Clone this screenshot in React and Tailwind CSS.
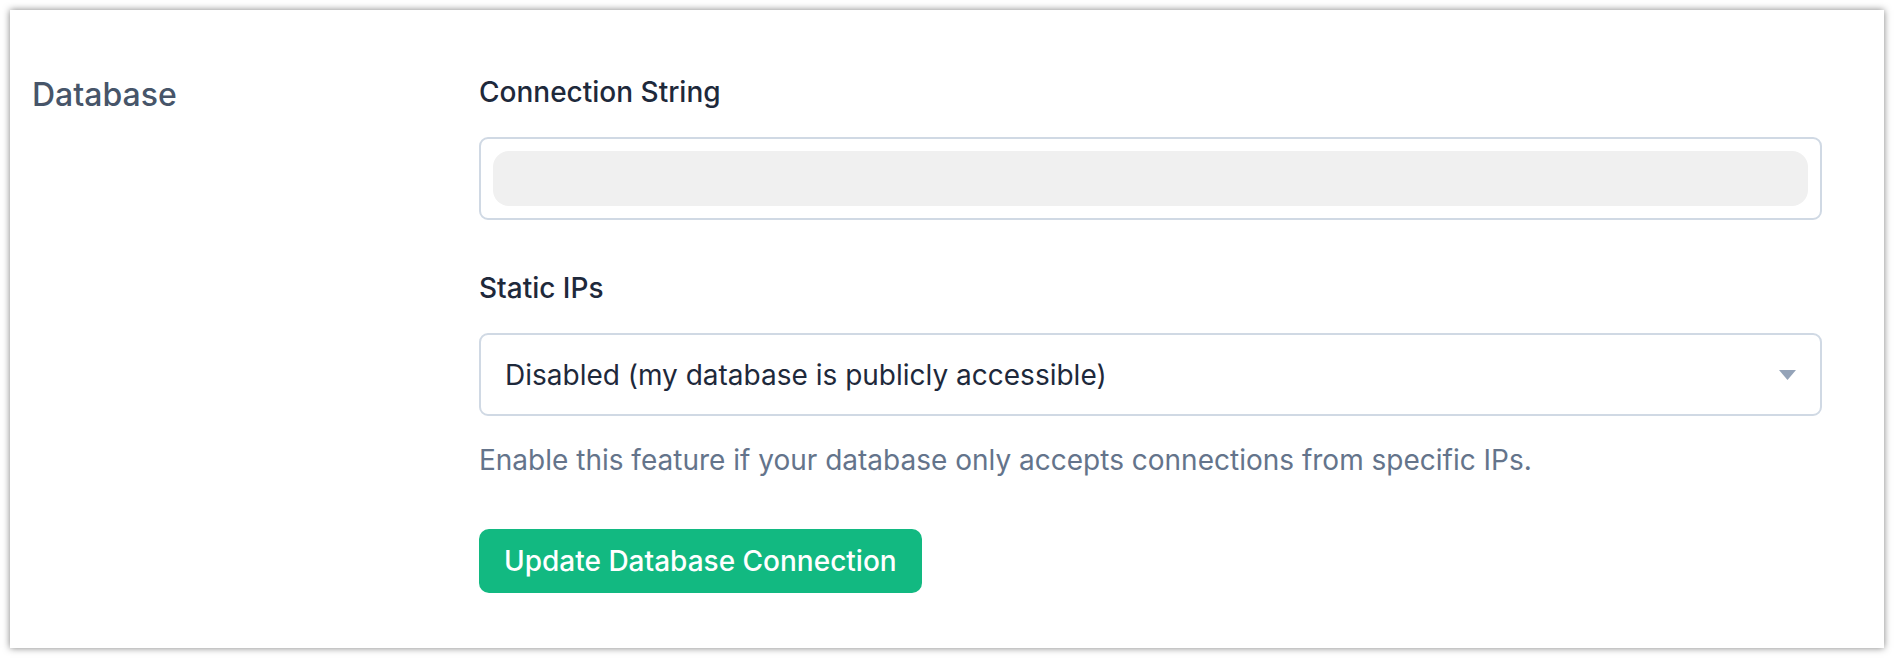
import { useState } from "react";

const STATIC_IP_OPTIONS = [
  "Disabled (my database is publicly accessible)",
  "Enabled",
];

function Field({ label, children }) {
  return (
    <div className="flex flex-col">
      <label className="text-[28px] font-medium leading-[43px] text-[#1e293b]">
        {label}
      </label>
      <div className="mt-[23px]">{children}</div>
    </div>
  );
}

export default function App() {
  const [staticIps] = useState(STATIC_IP_OPTIONS[0]);

  return (
    <div className="h-[658px] bg-white p-[10px] font-['Inter',sans-serif]">
      <div className="flex h-full bg-white pl-[22px] pr-[62px] pt-[61px] shadow-[0_0_7px_rgba(0,0,0,0.5)]">
        <div className="w-[447px] shrink-0">
          <h2 className="text-[32px] font-medium leading-[48px] text-[#475569]">
            Database
          </h2>
        </div>

        <div className="flex min-w-0 flex-1 flex-col">
          <Field label="Connection String">
            <div className="h-[83px] rounded-[9px] border-2 border-[#d0d9e4] p-[12px]">
              <div className="h-full rounded-[16px] bg-[#f0f0f0]" />
            </div>
          </Field>

          <div className="mt-[47px]">
            <Field label="Static IPs">
              <div className="flex h-[83px] items-center justify-between rounded-[9px] border-2 border-[#d0d9e4] pl-[24px] pr-[24px]">
                <span className="text-[28px] text-[#1e293b]">{staticIps}</span>
                <svg width="17" height="10" viewBox="0 0 17 10" aria-hidden="true">
                  <path d="M0 0h17L8.5 10z" fill="#94a3b8" />
                </svg>
              </div>
            </Field>
          </div>

          <p className="mt-[23px] text-[28px] leading-[43px] text-[#64748b]">
            Enable this feature if your database only accepts connections from
            specific IPs.
          </p>

          <div className="mt-[47px]">
            <button
              type="button"
              className="h-[64px] rounded-[10px] bg-[#12b981] px-[25px] text-[28px] font-medium text-white"
            >
              Update Database Connection
            </button>
          </div>
        </div>
      </div>
    </div>
  );
}
